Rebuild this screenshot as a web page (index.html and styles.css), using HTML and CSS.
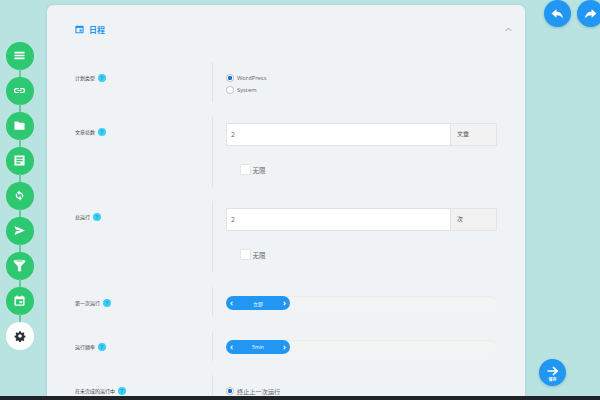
FILE: index.html
```html
<!DOCTYPE html>
<html lang="zh">
<head>
<meta charset="utf-8">
<title>日程</title>
<link rel="stylesheet" href="styles.css">
</head>
<body>
<div class="page">
  <nav class="rail">
    <a class="step"><svg viewBox="0 0 24 24"><path d="M1 4h22v3.500H1zM1 10.200h22v3.500H1zM1 16.500h22V20H1z"/></svg></a>
    <a class="step"><svg viewBox="0 0 24 24"><path fill-rule="evenodd" d="M5 6.500h6V9H5.500a3 3 0 0 0 0 6H11v2.500H5a5.500 5.500 0 0 1 0-11zm8 0h6a5.500 5.500 0 0 1 0 11h-6V15h5.500a3 3 0 0 0 0-6H13zM7.500 10.700h9v2.600h-9z"/></svg></a>
    <a class="step"><svg viewBox="0 0 24 24"><path d="M1 4.500A1.500 1.500 0 0 1 2.500 3H9l2.500 3h10A1.500 1.500 0 0 1 23 7.500V20a1.500 1.500 0 0 1-1.500 1.500h-19A1.500 1.500 0 0 1 1 20z"/></svg></a>
    <a class="step"><svg viewBox="0 0 24 24"><path fill-rule="evenodd" d="M1 1h22v22H1zM5 5v3h14V5zm0 5.500v3h14v-3zM5 16v3h9v-3z"/></svg></a>
    <a class="step"><svg viewBox="0 0 24 24"><path d="M12 4.500V.500L6.500 6l5.500 5.500V7.500a4.800 4.800 0 0 1 5 6.300l2.300 2.300A8 8 0 0 0 12 4.500zM12 16.500a4.800 4.800 0 0 1-5-6.300L4.700 7.900A8 8 0 0 0 12 19.500v4l5.500-5.500-5.500-5.500z"/></svg></a>
    <a class="step"><svg viewBox="0 0 24 24"><path d="M1 2l23 10L1 22l3-8 10-2-10-2z"/></svg></a>
    <a class="step"><svg class="wide" viewBox="0 0 24 24"><path fill-rule="evenodd" d="M1 3.500C1 .500 23 .500 23 3.500c0 2-7 8-8 10v8c0 2-6 2-6 0v-8C8 11.500 1 5.500 1 3.500zM5 3.500c2.500 1.200 11.500 1.200 14 0-2.500-1-11.500-1-14 0z"/></svg></a>
    <a class="step"><svg viewBox="0 0 24 24"><path fill-rule="evenodd" d="M5 1h3v2.500h8V1h3v2.500h2.500A1.500 1.500 0 0 1 23 5v17a1.500 1.500 0 0 1-1.500 1.500h-19A1.500 1.500 0 0 1 1 22V5a1.500 1.500 0 0 1 1.500-1.500H5zM4 9v11.500h16V9zm8 4h6v5h-6z"/></svg></a>
    <a class="step active"><svg viewBox="0 0 24 24"><path fill-rule="evenodd" d="M10 1.500h4l.6 3 1.900.8 2.600-1.700 2.800 2.800-1.700 2.600.8 1.900 3 .6v4l-3 .6-.8 1.900 1.700 2.600-2.800 2.800-2.600-1.700-1.900.8-.6 3h-4l-.6-3-1.900-.8-2.600 1.700-2.800-2.800 1.700-2.600-.8-1.900-3-.6v-4l3-.6.8-1.900-1.700-2.600 2.800-2.800 2.600 1.700 1.900-.8zM12 8a4 4 0 1 0 0 8 4 4 0 0 0 0-8z" transform="translate(1.200 1.200) scale(.9)"/></svg></a>
  </nav>

  <main class="card">
    <header class="card-head">
      <h2 class="card-title">
        <svg class="title-icon" viewBox="0 0 24 24"><path fill-rule="evenodd" d="M3 2h18a2 2 0 0 1 2 2v16a2 2 0 0 1-2 2H3a2 2 0 0 1-2-2V4a2 2 0 0 1 2-2zm1 6v11h16V8zm8 4h6v5h-6z"/></svg>
        日程
      </h2>
      <svg class="chevron" viewBox="0 0 12 8"><path d="M1 6.500l5-5 5 5" fill="none" stroke="#8d9499" stroke-width="1.400"/></svg>
    </header>

    <section class="row row-type">
      <div class="label">计划类型<span class="help">?</span></div>
      <div class="field radios">
        <label class="radio on"><i></i>WordPress</label>
        <label class="radio"><i></i>System</label>
      </div>
    </section>

    <section class="row row-input">
      <div class="label">文章总数<span class="help">?</span></div>
      <div class="field">
        <div class="input-group"><div class="input">2</div><div class="addon">文章</div></div>
        <label class="check"><i></i>无限</label>
      </div>
    </section>

    <section class="row row-input row-total">
      <div class="label">总运行<span class="help">?</span></div>
      <div class="field">
        <div class="input-group"><div class="input">2</div><div class="addon">次</div></div>
        <label class="check"><i></i>无限</label>
      </div>
    </section>

    <section class="row row-slider">
      <div class="label">第一次运行<span class="help">?</span></div>
      <div class="field">
        <div class="track"><div class="pill"><b>‹</b><span>立即</span><b>›</b></div></div>
      </div>
    </section>

    <section class="row row-slider">
      <div class="label">运行频率<span class="help">?</span></div>
      <div class="field">
        <div class="track"><div class="pill"><b>‹</b><span>5min</span><b>›</b></div></div>
      </div>
    </section>

    <section class="row row-last">
      <div class="label">在未完成的运行中<span class="help">?</span></div>
      <div class="field">
        <label class="radio on big"><i></i>终止上一次运行</label>
      </div>
    </section>
  </main>

  <div class="fab-top">
    <a class="fab"><svg viewBox="0 0 24 24"><path d="M10 3.500v5c7 .5 11.500 5 12 12.500-2.500-4-6.500-6-12-6v5L1 12z"/></svg></a>
    <a class="fab"><svg viewBox="0 0 24 24"><path d="M14 3.500v5C7 9 2.500 13.500 2 21c2.500-4 6.500-6 12-6v5l9-8z"/></svg></a>
  </div>
  <a class="fab save"><svg viewBox="0 0 24 24"><path d="M13 3l10 9-10 9-2.200-2.200 5.300-5.100H1v-3.400h15.100l-5.300-5.100z"/></svg><span>保存</span></a>
</div>
<footer class="bar"></footer>
</body>
</html>
```
FILE: styles.css
```css
* { box-sizing: border-box; }
html, body { margin: 0; height: 400px; overflow: hidden; }
body {
  background: #b8e3e1;
  font-family: "Open Sans", "Noto Sans CJK SC", sans-serif;
  color: #555;
  display: flex;
  flex-direction: column;
}
.page { position: relative; flex: 1; min-height: 0; overflow: hidden; }
.bar { height: 4px; background: #1f2429; }

.rail {
  position: absolute;
  left: 6px;
  top: 42px;
  display: flex;
  flex-direction: column;
  gap: 7.500px;
}
.step {
  position: relative;
  width: 27.500px;
  height: 27.500px;
  border-radius: 50%;
  background: #2dc86f;
  display: flex;
  align-items: center;
  justify-content: center;
}
.step:not(:last-child)::after {
  content: "";
  position: absolute;
  left: 12.700px;
  top: 27px;
  width: 2px;
  height: 9px;
  background: #62cf96;
}
.step svg { width: 11px; height: 11px; fill: #fff; }
.step svg.wide { width: 13px; height: 13px; }
.step.active { background: #fff; }
.step.active svg { width: 12px; height: 12px; fill: #2b3138; }

.card {
  position: absolute;
  left: 47px;
  top: 5px;
  width: 478px;
  height: 500px;
  padding: 0 28px;
  background: #eff3f6;
  border-radius: 6px;
  box-shadow: 0 0 2px rgba(120, 170, 170, .6);
}
.card-head {
  height: 57px;
  display: flex;
  align-items: center;
  justify-content: space-between;
  padding-bottom: 8px;
}
.card-title {
  margin: 0;
  display: flex;
  align-items: center;
  gap: 5px;
  font-size: 8px;
  font-weight: 700;
  color: #2196f3;
}
.title-icon { width: 9px; height: 9px; fill: #2196f3; }
.chevron { width: 7px; height: 5px; margin-right: -15px; }

.row {
  display: grid;
  grid-template-columns: 137px 285px;
  margin-bottom: 14px;
}
.row-type { height: 40px; }
.row-input { height: 72px; margin-bottom: 13px; }
.row-total { height: 71px; margin-bottom: 15px; }
.row-slider { height: 30px; }
.row-last { height: 40px; }

.label {
  display: flex;
  align-items: center;
  gap: 3px;
  height: 10px;
  margin-top: 10.400px;
  font-size: 5px;
  color: #444;
}
.help {
  flex: none;
  width: 8px;
  height: 8px;
  margin-top: 1px;
  border-radius: 50%;
  background: #38d0f6;
  color: #2f9fc8;
  font-size: 6px;
  font-weight: 700;
  line-height: 8px;
  text-align: center;
}
.field {
  border-left: 1px solid #dfe4e6;
  padding: 7px 0 0 13px;
  min-width: 0;
}
.radios { padding-top: 12px; display: flex; flex-direction: column; gap: 4px; }

.radio {
  display: flex;
  align-items: center;
  gap: 3.500px;
  height: 8px;
  font-size: 5.800px;
  color: #666;
}
.radio i {
  width: 7.500px;
  height: 7.500px;
  border-radius: 50%;
  border: 1px solid #b9bfc2;
  background: #fff;
  flex: none;
}
.radio.on i { background: radial-gradient(circle, #1976d2 0 2px, #fff 2.400px); }
.radio.big { font-size: 6.200px; margin-top: 5px; }

.input-group {
  display: flex;
  width: 271px;
  height: 23px;
}
.input {
  flex: 1;
  background: #fff;
  border: 1px solid #dfe3e3;
  padding-left: 4px;
  font-size: 7px;
  line-height: 21px;
  color: #666;
}
.addon {
  width: 46px;
  background: #f2f2f2;
  border: 1px solid #e3e5e5;
  border-left: 0;
  padding-left: 6px;
  font-size: 6px;
  line-height: 21px;
  color: #555;
}
.check {
  display: flex;
  align-items: center;
  gap: 1.500px;
  height: 11px;
  margin: 18px 0 0 14px;
  font-size: 6.500px;
  color: #666;
}
.check i {
  width: 11px;
  height: 11px;
  background: #fff;
  border: 1px solid #e2e5e6;
  border-radius: 1px;
}

.track {
  width: 271px;
  height: 14px;
  margin-top: 2px;
  border-radius: 7px;
  background: #f2f3f3;
  box-shadow: inset 0 1px 1px #e9ebeb;
}
.pill {
  width: 64px;
  height: 14px;
  padding: 0 4px;
  border-radius: 7px;
  background: #2196f3;
  color: #fff;
  font-size: 5px;
  display: flex;
  align-items: center;
  justify-content: space-between;
}
.pill b { font-size: 8px; line-height: 14px; font-weight: 700; }

.fab-top {
  position: absolute;
  left: 544px;
  top: 0;
  display: flex;
  gap: 6px;
}
.fab {
  width: 27px;
  height: 27px;
  border-radius: 50%;
  background: #2196f3;
  box-shadow: 0 1px 3px rgba(60, 120, 130, .35);
  display: flex;
  align-items: center;
  justify-content: center;
  flex: none;
}
.fab svg { width: 13px; height: 13px; fill: #fff; }
.save {
  position: absolute;
  left: 539px;
  top: 359px;
  flex-direction: column;
}
.save svg { width: 12px; height: 12px; margin-top: 1px; }
.save span { font-size: 4px; line-height: 5px; color: #fff; font-weight: 700; }
```
